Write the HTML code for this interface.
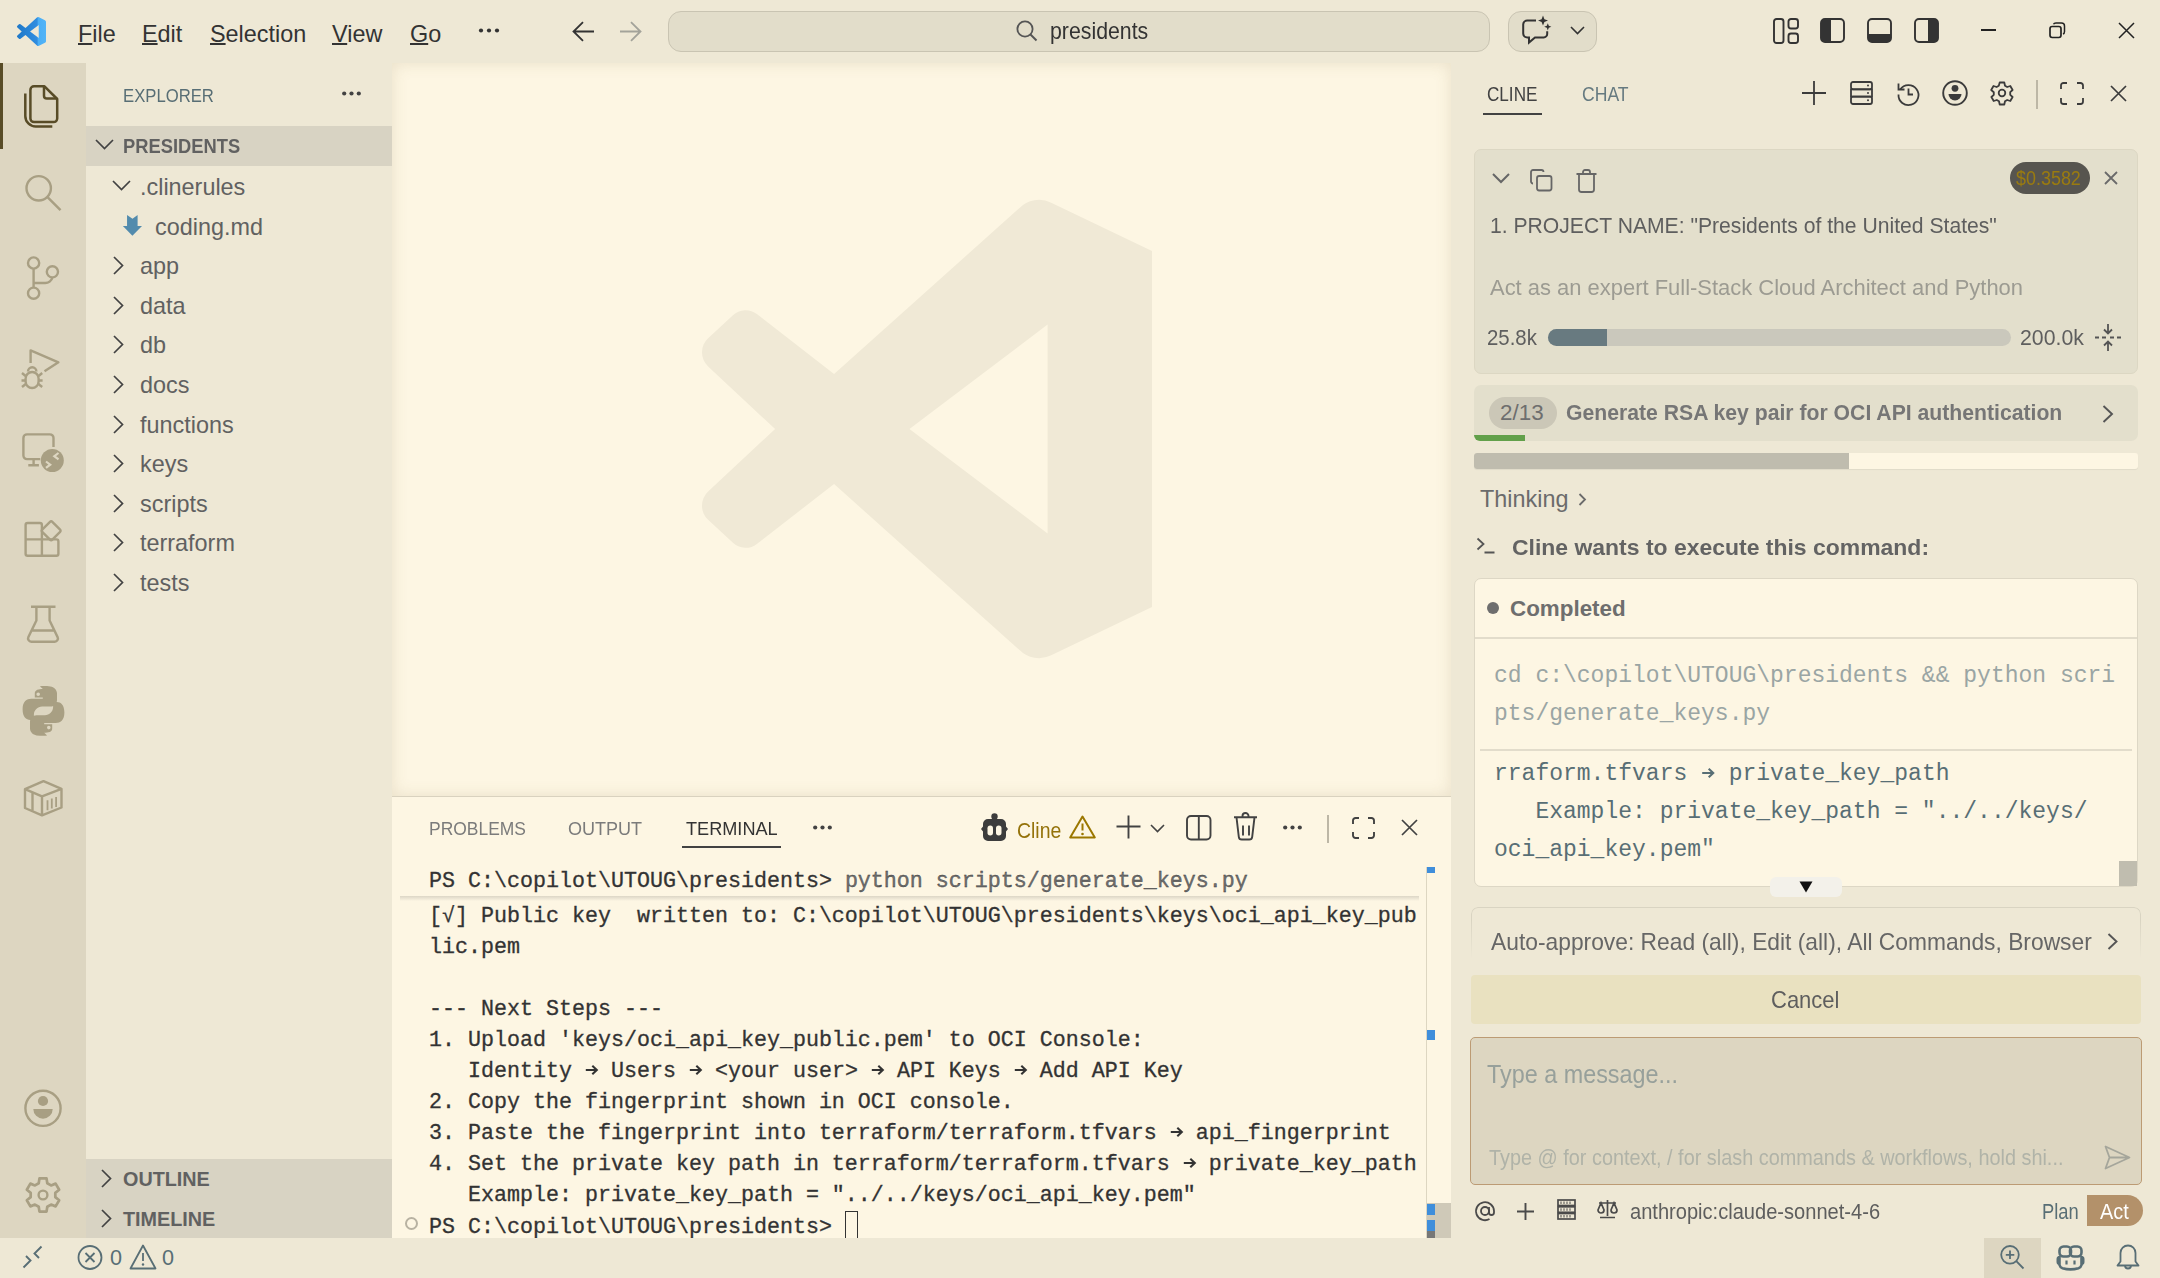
<!DOCTYPE html>
<html><head><meta charset="utf-8">
<style>
*{box-sizing:border-box;margin:0;padding:0}
html,body{width:2160px;height:1278px;overflow:hidden;background:#EEE8D5;font-family:"Liberation Sans",sans-serif;color:#616161}
.a{position:absolute}
svg{position:absolute;overflow:visible}
svg.arr{position:static;display:inline-block;vertical-align:2px}
.mono{font-family:"Liberation Mono",monospace}
#title{left:0;top:0;width:2160px;height:63px;background:#EEE8D5}
#act{left:0;top:63px;width:86px;height:1175px;background:#DDD6C1}
#side{left:86px;top:63px;width:306px;height:1175px;background:#EEE8D5}
#editor{left:392px;top:63px;width:1059px;height:733px;background:#FDF6E3}
#panel{left:392px;top:796px;width:1059px;height:442px;background:#FDF6E3;border-top:1px solid #D9D2BF}
#aux{left:1451px;top:63px;width:709px;height:1175px;background:#EEE8D5}
#status{left:0;top:1238px;width:2160px;height:40px;background:#EEE8D5}
.menu{top:19.5px;font-size:23.4px;color:#333;line-height:28px}
.menu u{text-decoration:underline;text-decoration-thickness:1.8px;text-underline-offset:0.8px}
.row{left:0;width:306px;height:40px;font-size:23.4px;line-height:40px}
.hdr{left:0;width:306px;height:40px;background:#D8D3C3;font-weight:700;font-size:19.8px;line-height:40px;color:#616161}
.term{font-family:"Liberation Mono",monospace;font-size:21.67px;color:#333;-webkit-text-stroke:0.3px #333;white-space:pre;line-height:31px}
</style></head><body>
<div id="title" class="a">
<svg style="left:17px;top:17px" width="29" height="29" viewBox="0 0 100 100"><defs><linearGradient id="lg" x1="0" y1="0" x2="1" y2="0"><stop offset="0" stop-color="#1F78C8"/><stop offset="0.7" stop-color="#2F8DE0"/><stop offset="0.72" stop-color="#4AAEF5"/><stop offset="1" stop-color="#52B4F7"/></linearGradient></defs><path fill="url(#lg)" d="M96.46 10.8L75.86.87a6.23 6.23 0 0 0-7.1 1.2L29.35 38.04 12.19 25.01a4.16 4.16 0 0 0-5.32.24L1.36 30.26a4.16 4.16 0 0 0 0 6.16L16.25 50 1.36 63.58a4.16 4.16 0 0 0 0 6.16l5.51 5.01a4.16 4.16 0 0 0 5.32.24l17.16-13.03 39.41 35.97a6.23 6.23 0 0 0 7.1 1.2l20.6-9.92a6.24 6.24 0 0 0 3.54-5.630V16.43a6.24 6.24 0 0 0-3.54-5.63zM75.01 72.7L45.1 50l29.91-22.7z"/></svg>
<div class="a menu" style="left:78px"><u>F</u>ile</div>
<div class="a menu" style="left:142px"><u>E</u>dit</div>
<div class="a menu" style="left:210px"><u>S</u>election</div>
<div class="a menu" style="left:332px"><u>V</u>iew</div>
<div class="a menu" style="left:410px"><u>G</u>o</div>
<svg style="left:479px;top:28px" width="20" height="5"><circle cx="2" cy="2.5" r="2.1" fill="#333"/><circle cx="10" cy="2.5" r="2.1" fill="#333"/><circle cx="18" cy="2.5" r="2.1" fill="#333"/></svg>
<svg style="left:572px;top:21px" width="23" height="21" viewBox="0 0 23 21"><path d="M22 10.5H2M11 1.2L1.5 10.5L11 19.8" fill="none" stroke="#333" stroke-width="1.8"/></svg>
<svg style="left:619px;top:21px" width="23" height="21" viewBox="0 0 23 21"><path d="M1 10.5H21M12 1.2L21.5 10.5L12 19.8" fill="none" stroke="#A3A39A" stroke-width="1.8"/></svg>
<div class="a" style="left:668px;top:11px;width:822px;height:41px;border-radius:13px;background:#E2DDCA;border:1.5px solid #C9C4B2"></div>
<svg style="left:1016px;top:20px" width="22" height="22" viewBox="0 0 22 22"><circle cx="9" cy="9" r="7.6" fill="none" stroke="#555" stroke-width="1.8"/><path d="M14.5 14.5L20.5 20.5" stroke="#555" stroke-width="2"/></svg>
<div class="a" style="left:1050px;top:17px;font-size:23.4px;line-height:28px;color:#333;transform:scaleX(0.91);transform-origin:0 0">presidents</div>
<div class="a" style="left:1508px;top:11px;width:89px;height:41px;border-radius:13px;background:#E2DDCA;border:1.5px solid #C9C4B2"></div>
<svg style="left:1522px;top:16px" width="30" height="28" viewBox="0 0 30 28"><path d="M14 4.6H5.2a4 4 0 0 0-4 4V17.4a4 4 0 0 0 4 4h1.8v5.2L13 21.4h8.7a3.5 3.5 0 0 0 3.5-3.5v-2.6" fill="none" stroke="#333" stroke-width="2"/><path d="M21 -0.4l1.4 3.6 3.6 1.4-3.6 1.4-1.4 3.6-1.4-3.6-3.6-1.4 3.6-1.4z" fill="#333"/><path d="M25.8 7.2l1 2.6 2.6 1-2.6 1-1 2.6-1-2.6-2.6-1 2.6-1z" fill="#333"/></svg>
<svg style="left:1570px;top:26px" width="15" height="9" viewBox="0 0 15 9"><path d="M1 1l6.5 6.5L14 1" fill="none" stroke="#333" stroke-width="1.6"/></svg>
<svg style="left:1773px;top:18px" width="26" height="26" viewBox="0 0 26 26"><rect x="1" y="1" width="9.5" height="24" rx="2.5" fill="none" stroke="#333" stroke-width="1.9"/><rect x="15.5" y="1" width="9.5" height="9.5" rx="2.5" fill="none" stroke="#333" stroke-width="1.9"/><rect x="15.5" y="15.5" width="9.5" height="9.5" rx="2.5" fill="none" stroke="#333" stroke-width="1.9"/></svg>
<svg style="left:1820px;top:18px" width="25" height="25" viewBox="0 0 25 25"><rect x="1" y="1" width="23" height="23" rx="4" fill="none" stroke="#333" stroke-width="1.9"/><path d="M5 1h6v23H5a4 4 0 0 1-4-4V5a4 4 0 0 1 4-4z" fill="#333"/></svg>
<svg style="left:1867px;top:18px" width="25" height="25" viewBox="0 0 25 25"><rect x="1" y="1" width="23" height="23" rx="4" fill="none" stroke="#333" stroke-width="1.9"/><path d="M1 16h23v4a4 4 0 0 1-4 4H5a4 4 0 0 1-4-4z" fill="#333"/></svg>
<svg style="left:1914px;top:18px" width="25" height="25" viewBox="0 0 25 25"><rect x="1" y="1" width="23" height="23" rx="4" fill="none" stroke="#333" stroke-width="1.9"/><path d="M14 1h6a4 4 0 0 1 4 4v15a4 4 0 0 1-4 4h-6z" fill="#333"/></svg>
<div class="a" style="left:1981px;top:29px;width:15px;height:2px;background:#222"></div>
<svg style="left:2049px;top:22px" width="17" height="17" viewBox="0 0 17 17"><rect x="1" y="4.5" width="11" height="11" rx="2.2" fill="none" stroke="#222" stroke-width="1.7"/><path d="M4.5 2.2Q5 1 7 1h5.5Q15.5 1 15.5 4v5.5Q15.5 11.5 14 12" fill="none" stroke="#222" stroke-width="1.5"/></svg>
<svg style="left:2118px;top:22px" width="17" height="17" viewBox="0 0 17 17"><path d="M1 1L16 16M16 1L1 16" stroke="#222" stroke-width="1.5"/></svg>
</div>
<div id="act" class="a"></div>
<svg style="left:0;top:0" width="86" height="1278" viewBox="0 0 86 1278">
<rect x="0" y="63" width="3" height="86" fill="#584C27"/>
<g fill="none" stroke="#584C27" stroke-width="2.5" stroke-linejoin="round">
<path d="M34 86.3h10.5l12.7 12.7v19.5a3.6 3.6 0 0 1-3.6 3.6H34a3.6 3.6 0 0 1-3.6-3.6V89.9a3.6 3.6 0 0 1 3.6-3.6z"/>
<path d="M44 86.3v9.5a2.8 2.8 0 0 0 2.8 2.8h10.4"/>
<path d="M25.3 93.5v22.5a10.5 10.5 0 0 0 10.5 10.5h16.5"/>
</g>
<g fill="none" stroke="#A89F83" stroke-width="2.4">
<circle cx="38.7" cy="188.3" r="12.2"/><path d="M47.5 197.2L60.5 210.2"/>
<circle cx="33.6" cy="263" r="5.6"/><circle cx="33.6" cy="293.2" r="5.6"/><circle cx="52.4" cy="271.8" r="5.6"/>
<path d="M33.6 268.6V287.6M33.6 283H45a7.4 7.4 0 0 0 7.4-5.6"/>
<path d="M30.6 363V350.4L58.4 362.3L44.5 371.2" stroke-linejoin="round"/>
<path d="M25.6 378.5a6.5 6.5 0 0 1 13 0v3a6.5 6.5 0 0 1-13 0z"/><path d="M28 371.5a4.2 4.2 0 0 1 8.4 0"/><path d="M22 373l3.6 3M42.2 373l-3.6 3M21.5 380.5h4M38.6 380.5h4M22 387l3.8-3M42.2 387l-3.8-3"/>
<path d="M53.5 447V438a3.6 3.6 0 0 0-3.6-3.6H27a3.6 3.6 0 0 0-3.6 3.6v17.5a3.6 3.6 0 0 0 3.6 3.6h13.3"/><path d="M33.6 459.5v5.6M28.3 465.3h10.6"/>
<path d="M25.6 539.4h16.3v16.3H27.6a2 2 0 0 1-2-2zM25.6 539.4V525a2 2 0 0 1 2-2h12.3a2 2 0 0 1 2 2v14.4M41.9 539.4h14.5a2 2 0 0 1 2 2v12.3a2 2 0 0 1-2 2H41.9"/>
<path d="M52.3 521.8l7.8 7.8a1.6 1.6 0 0 1 0 2.3l-7.8 7.8a1.6 1.6 0 0 1-2.3 0l-7.8-7.8a1.6 1.6 0 0 1 0-2.3l7.8-7.8a1.6 1.6 0 0 1 2.3 0z" stroke-linejoin="round"/>
<path d="M31 606.8h24.5M36.4 606.8v13.8l-8 16.5a3.2 3.2 0 0 0 2.9 4.6h23.4a3.2 3.2 0 0 0 2.9-4.6l-8-16.5V606.8M31.8 630.5h22.5" stroke-linejoin="round"/>
<path d="M43.5 781.2L61.5 788.8V807.5L42 815.3L25 808V789.2z M25 789.2L42 796.3L61.5 788.8 M42 796.3V815.3 M32.5 792.5V811.2" stroke-linejoin="round"/>
<path d="M47.5 800.2v10M51.8 798.6v10M56.1 797v10" stroke-width="1.8"/>
<circle cx="43" cy="1108.3" r="17.6"/>
<path d="M38.72 1183.25 L39.47 1178.37 L46.53 1178.37 L47.28 1183.25 L51.03 1185.42 L55.63 1183.62 L59.17 1189.75 L55.31 1192.83 L55.31 1197.17 L59.17 1200.25 L55.63 1206.38 L51.03 1204.58 L47.28 1206.75 L46.53 1211.63 L39.47 1211.63 L38.72 1206.75 L34.97 1204.58 L30.37 1206.38 L26.83 1200.25 L30.69 1197.17 L30.69 1192.83 L26.83 1189.75 L30.37 1183.62 L34.97 1185.42Z" stroke-linejoin="round" stroke-width="2.7"/>
<circle cx="43" cy="1195" r="4.4"/>
</g>
<circle cx="52.3" cy="460.5" r="11.5" fill="#A89F83"/>
<path d="M46 461.5l4.2 3.2-4.2 3.2M58.5 453l-4.2 3.2 4.2 3.2" fill="none" stroke="#DDD6C1" stroke-width="2.2"/>
<g fill="#A89F83">
<circle cx="43" cy="1101" r="5.1"/>
<path d="M33.3 1109h19.4a9.7 9.7 0 0 1-19.4 0z"/>
<path d="M42.8 689c-4 0-8 .8-8 4.3v4.2h8v1.3H31.2c-4.4 0-8.6 2.7-8.6 10.5s3.6 10.6 7.6 10.6h3.7v-5.2c0-4.4 3.7-8.2 8.2-8.2h8.5c3.6 0 6.4-3 6.4-6.6v-6.6c0-3.6-3-6.3-6.6-6.9-2.2-.3-4.6-.4-6.6-.4-1.4 0-2.6.1-3.9.3zm-4.6 3.4a1.8 1.8 0 1 1 0 3.6 1.8 1.8 0 0 1 0-3.6z"/>
<path d="M44.2 732.8c4 0 8-.8 8-4.3v-4.2h-8v-1.3h11.6c4.4 0 8.6-2.7 8.6-10.5s-3.6-10.6-7.6-10.6h-3.7v5.2c0 4.4-3.7 8.2-8.2 8.2h-8.5c-3.6 0-6.4 3-6.4 6.6v6.6c0 3.6 3 6.3 6.6 6.9 2.2.3 4.6.4 6.6.4 1.4 0 2.6-.1 3.9-.3zm4.6-3.4a1.8 1.8 0 1 1 0-3.6 1.8 1.8 0 0 1 0 3.6z"/>
</g>
</svg>
<div id="side" class="a">
<div class="a" style="left:37px;top:22.5px;font-size:19px;line-height:20px;color:#586E75;transform:scaleX(0.878);transform-origin:0 0">EXPLORER</div>
<svg style="left:256px;top:28px" width="20" height="5"><circle cx="2.2" cy="2.5" r="2.1" fill="#424242"/><circle cx="9.5" cy="2.5" r="2.1" fill="#424242"/><circle cx="16.8" cy="2.5" r="2.1" fill="#424242"/></svg>
<div class="a hdr" style="top:63px"><svg style="left:9px;top:13px" width="19" height="11" viewBox="0 0 19 11"><path d="M1 1l8.5 8.5L18 1" fill="none" stroke="#424242" stroke-width="1.7"/></svg><span class="a" style="left:37px;top:0;transform:scaleX(0.927);transform-origin:0 0">PRESIDENTS</span></div>
<div class="a row" style="top:104px"><svg style="left:26px;top:13px" width="19" height="11" viewBox="0 0 19 11"><path d="M1 1l8.5 8.5L18 1" fill="none" stroke="#424242" stroke-width="1.7"/></svg><span class="a" style="left:54px;top:0">.clinerules</span></div>
<div class="a row" style="top:144px"><svg style="left:36px;top:7px" width="21" height="23" viewBox="0 0 21 23"><path d="M5.05 1.1L10.5 4.8L15.6 1.1V12.1H20L10.4 21.7L0.9 12.1H5.05Z" fill="#528BAD"/></svg><span class="a" style="left:69px;top:0">coding.md</span></div>
<div class="a row" style="top:183px"><svg style="left:27px;top:10px" width="11" height="19" viewBox="0 0 11 19"><path d="M1 1l8.5 8.5L1 18" fill="none" stroke="#424242" stroke-width="1.7"/></svg><span class="a" style="left:54px;top:0">app</span></div>
<div class="a row" style="top:223px"><svg style="left:27px;top:10px" width="11" height="19" viewBox="0 0 11 19"><path d="M1 1l8.5 8.5L1 18" fill="none" stroke="#424242" stroke-width="1.7"/></svg><span class="a" style="left:54px;top:0">data</span></div>
<div class="a row" style="top:262px"><svg style="left:27px;top:10px" width="11" height="19" viewBox="0 0 11 19"><path d="M1 1l8.5 8.5L1 18" fill="none" stroke="#424242" stroke-width="1.7"/></svg><span class="a" style="left:54px;top:0">db</span></div>
<div class="a row" style="top:302px"><svg style="left:27px;top:10px" width="11" height="19" viewBox="0 0 11 19"><path d="M1 1l8.5 8.5L1 18" fill="none" stroke="#424242" stroke-width="1.7"/></svg><span class="a" style="left:54px;top:0">docs</span></div>
<div class="a row" style="top:342px"><svg style="left:27px;top:10px" width="11" height="19" viewBox="0 0 11 19"><path d="M1 1l8.5 8.5L1 18" fill="none" stroke="#424242" stroke-width="1.7"/></svg><span class="a" style="left:54px;top:0">functions</span></div>
<div class="a row" style="top:381px"><svg style="left:27px;top:10px" width="11" height="19" viewBox="0 0 11 19"><path d="M1 1l8.5 8.5L1 18" fill="none" stroke="#424242" stroke-width="1.7"/></svg><span class="a" style="left:54px;top:0">keys</span></div>
<div class="a row" style="top:421px"><svg style="left:27px;top:10px" width="11" height="19" viewBox="0 0 11 19"><path d="M1 1l8.5 8.5L1 18" fill="none" stroke="#424242" stroke-width="1.7"/></svg><span class="a" style="left:54px;top:0">scripts</span></div>
<div class="a row" style="top:460px"><svg style="left:27px;top:10px" width="11" height="19" viewBox="0 0 11 19"><path d="M1 1l8.5 8.5L1 18" fill="none" stroke="#424242" stroke-width="1.7"/></svg><span class="a" style="left:54px;top:0">terraform</span></div>
<div class="a row" style="top:500px"><svg style="left:27px;top:10px" width="11" height="19" viewBox="0 0 11 19"><path d="M1 1l8.5 8.5L1 18" fill="none" stroke="#424242" stroke-width="1.7"/></svg><span class="a" style="left:54px;top:0">tests</span></div>
<div class="a hdr" style="top:1096px"><svg style="left:15px;top:10px" width="11" height="19" viewBox="0 0 11 19"><path d="M1 1l8.5 8.5L1 18" fill="none" stroke="#424242" stroke-width="1.7"/></svg><span class="a" style="left:37px;top:0">OUTLINE</span></div>
<div class="a hdr" style="top:1136px;height:39px"><svg style="left:15px;top:10px" width="11" height="19" viewBox="0 0 11 19"><path d="M1 1l8.5 8.5L1 18" fill="none" stroke="#424242" stroke-width="1.7"/></svg><span class="a" style="left:37px;top:0">TIMELINE</span></div>
</div>
<div id="editor" class="a">
<svg style="left:310px;top:136px" width="450" height="460" viewBox="0 0 100 100" preserveAspectRatio="none"><path fill="#F0E9D6" fill-rule="evenodd" d="M100 11.3V88.7L77.6 99.2a6.23 6.23 0 0 1-7.1-1.2L29.35 61.96 12.19 74.99a4.16 4.16 0 0 1-5.32-.24L1.36 69.74a4.16 4.16 0 0 1 0-6.16L16.25 50 1.36 36.42a4.16 4.16 0 0 1 0-6.16l5.51-5.01a4.16 4.16 0 0 1 5.32-.24L29.35 38.04 70.5 2a6.23 6.23 0 0 1 7.1-1.2zM76.8 27.3L46.1 50 76.8 72.7z"/></svg>
<div class="a" style="left:0;top:0;width:1059px;height:733px;box-shadow:inset 0 0 16px rgba(130,110,60,0.16)"></div>
</div>
<div id="panel" class="a">
<div class="a" style="left:37px;top:21.5px;font-size:19px;line-height:20px;color:#7B7B7B;transform:scaleX(0.918);transform-origin:0 0;white-space:nowrap">PROBLEMS</div>
<div class="a" style="left:176px;top:21.5px;font-size:19px;line-height:20px;color:#7B7B7B;transform:scaleX(0.949);transform-origin:0 0;white-space:nowrap">OUTPUT</div>
<div class="a" style="left:294px;top:21.5px;font-size:19px;line-height:20px;color:#333;transform:scaleX(0.954);transform-origin:0 0;white-space:nowrap">TERMINAL</div>
<div class="a" style="left:290px;top:49px;width:99px;height:2px;background:#424242"></div>
<svg style="left:421px;top:28px" width="20" height="5"><circle cx="2.2" cy="2.5" r="2.1" fill="#424242"/><circle cx="9.5" cy="2.5" r="2.1" fill="#424242"/><circle cx="16.8" cy="2.5" r="2.1" fill="#424242"/></svg>
<svg style="left:589px;top:16px" width="28" height="30" viewBox="0 0 28 30"><circle cx="13.5" cy="3.5" r="3.2" fill="#3C3C3C"/><path d="M7 6h13a5 5 0 0 1 5 5v2.5l2 2.5-2 2.5V23a5 5 0 0 1-5 5H7a5 5 0 0 1-5-5v-4.5L0 16l2-2.5V11a5 5 0 0 1 5-5z" fill="#3C3C3C"/><rect x="6.5" y="12.5" width="5.5" height="10" rx="2.7" fill="#FDF6E3"/><rect x="15" y="12.5" width="5.5" height="10" rx="2.7" fill="#FDF6E3"/></svg>
<div class="a" style="left:625px;top:22px;font-size:21.6px;line-height:24px;color:#94720A;transform:scaleX(0.9);transform-origin:0 0">Cline</div>
<svg style="left:677px;top:18px" width="27" height="24" viewBox="0 0 27 24"><path d="M13.5 1.5L25.8 22.5H1.2z" fill="none" stroke="#9B7700" stroke-width="2" stroke-linejoin="round"/><path d="M13.5 8.5v7" stroke="#9B7700" stroke-width="2"/><circle cx="13.5" cy="19" r="1.3" fill="#9B7700"/></svg>
<svg style="left:724px;top:18px" width="25" height="24" viewBox="0 0 25 24"><path d="M12.5 0.5v23M0.5 11.5h24" stroke="#424242" stroke-width="1.9"/></svg>
<svg style="left:758px;top:27px" width="15" height="9" viewBox="0 0 15 9"><path d="M1 1l6.5 6.5L14 1" fill="none" stroke="#424242" stroke-width="1.6"/></svg>
<svg style="left:794px;top:18px" width="26" height="26" viewBox="0 0 26 26"><rect x="1" y="1" width="23.5" height="23.5" rx="4" fill="none" stroke="#424242" stroke-width="1.9"/><path d="M12.8 1v23.5" stroke="#424242" stroke-width="1.9"/></svg>
<svg style="left:841px;top:16px" width="25" height="28" viewBox="0 0 25 28"><path d="M1 4.3h23M9.5 4.3V3a3 3 0 0 1 6 0v1.3M3.5 4.3l2.3 19.5a3 3 0 0 0 3 2.7h7.4a3 3 0 0 0 3-2.7l2.3-19.5M10 12.5v10M16 12.5v10" fill="none" stroke="#424242" stroke-width="1.9"/></svg>
<svg style="left:891px;top:28px" width="20" height="5"><circle cx="2.2" cy="2.5" r="2.1" fill="#424242"/><circle cx="9.5" cy="2.5" r="2.1" fill="#424242"/><circle cx="16.8" cy="2.5" r="2.1" fill="#424242"/></svg>
<div class="a" style="left:935px;top:18px;width:1.5px;height:28px;background:#BDB7A6"></div>
<svg style="left:960px;top:20px" width="23" height="22" viewBox="0 0 23 22"><path d="M1 7V3.5A2.5 2.5 0 0 1 3.5 1H7M16 1h3.5A2.5 2.5 0 0 1 22 3.5V7M22 15v3.5a2.5 2.5 0 0 1-2.5 2.5H16M7 21H3.5A2.5 2.5 0 0 1 1 18.5V15" fill="none" stroke="#424242" stroke-width="1.9"/></svg>
<svg style="left:1009px;top:22px" width="17" height="17" viewBox="0 0 17 17"><path d="M1 1L16 16M16 1L1 16" stroke="#424242" stroke-width="1.7"/></svg>
<div class="a term" style="left:37px;top:69px;width:992px;height:34px;line-height:31px;color:#333">PS C:\copilot\UTOUG\presidents&gt; <span style="color:#6F6F6F">python scripts/generate_keys.py</span></div>
<div class="a" style="left:8px;top:99px;width:1019px;height:5px;background:linear-gradient(#DCD6C6,rgba(253,246,227,0))"></div>
<div class="a term" style="left:37px;top:104px;width:992px;height:340px;line-height:31px;overflow:hidden">[√] Public key  written to: C:\copilot\UTOUG\presidents\keys\oci_api_key_pub
lic.pem

--- Next Steps ---
1. Upload 'keys/oci_api_key_public.pem' to OCI Console:
   Identity <svg class="arr" width="13" height="10" viewBox="0 0 13 10"><path d="M0.8 5H11.8M7.3 0.8L11.8 5L7.3 9.2" fill="none" stroke="#333" stroke-width="2.1"/></svg> Users <svg class="arr" width="13" height="10" viewBox="0 0 13 10"><path d="M0.8 5H11.8M7.3 0.8L11.8 5L7.3 9.2" fill="none" stroke="#333" stroke-width="2.1"/></svg> &lt;your user&gt; <svg class="arr" width="13" height="10" viewBox="0 0 13 10"><path d="M0.8 5H11.8M7.3 0.8L11.8 5L7.3 9.2" fill="none" stroke="#333" stroke-width="2.1"/></svg> API Keys <svg class="arr" width="13" height="10" viewBox="0 0 13 10"><path d="M0.8 5H11.8M7.3 0.8L11.8 5L7.3 9.2" fill="none" stroke="#333" stroke-width="2.1"/></svg> Add API Key
2. Copy the fingerprint shown in OCI console.
3. Paste the fingerprint into terraform/terraform.tfvars <svg class="arr" width="13" height="10" viewBox="0 0 13 10"><path d="M0.8 5H11.8M7.3 0.8L11.8 5L7.3 9.2" fill="none" stroke="#333" stroke-width="2.1"/></svg> api_fingerprint
4. Set the private key path in terraform/terraform.tfvars <svg class="arr" width="13" height="10" viewBox="0 0 13 10"><path d="M0.8 5H11.8M7.3 0.8L11.8 5L7.3 9.2" fill="none" stroke="#333" stroke-width="2.1"/></svg> private_key_path
   Example: private_key_path = "../../keys/oci_api_key.pem"
PS C:\copilot\UTOUG\presidents&gt; <span style="display:inline-block;width:13px;height:28px;border:1.7px solid #333;vertical-align:-6px"></span></div>
<div class="a" style="left:13px;top:420px;width:13px;height:13px;border-radius:50%;border:2px solid #B8B2A2"></div>
<div class="a" style="left:1034px;top:70px;width:1px;height:372px;background:#DDD6C1"></div>
<div class="a" style="left:1035px;top:406px;width:24px;height:36px;background:#CFC9B8"></div>
<div class="a" style="left:1035px;top:70px;width:8px;height:6px;background:#3F8EDB"></div>
<div class="a" style="left:1035px;top:233px;width:8px;height:10px;background:#3F8EDB"></div>
<div class="a" style="left:1035px;top:407px;width:8px;height:11px;background:#3F8EDB"></div>
<div class="a" style="left:1035px;top:423px;width:8px;height:11px;background:#3F8EDB"></div>
<div class="a" style="left:1035px;top:434px;width:8px;height:8px;background:#777"></div>
</div>
<div id="aux" class="a"></div>
<div class="a" style="left:1487px;top:85.24px;font-family:'Liberation Sans';font-size:19.8px;line-height:19.8px;color:#424242;font-weight:400;white-space:pre;transform:scaleX(0.865);transform-origin:0 0;">CLINE</div>
<div class="a" style="left:1582px;top:85.24px;font-family:'Liberation Sans';font-size:19.8px;line-height:19.8px;color:#667A80;font-weight:400;white-space:pre;transform:scaleX(0.89);transform-origin:0 0;">CHAT</div>
<div class="a" style="left:1483px;top:113px;width:59px;height:2px;background:#424242"></div>
<svg style="left:1802px;top:81px" width="24" height="24" viewBox="0 0 24 24"><path d="M12 0v24M0 12h24" stroke="#3B3B3B" stroke-width="1.8"/></svg>
<svg style="left:1850px;top:81px" width="23" height="24" viewBox="0 0 23 24"><g fill="none" stroke="#3B3B3B" stroke-width="1.8"><rect x="1" y="1" width="21" height="7.3" rx="2"/><rect x="1" y="8.3" width="21" height="7.3" rx="0"/><rect x="1" y="15.6" width="21" height="7.4" rx="2"/></g><g fill="#3B3B3B"><circle cx="18" cy="4.6" r="1"/><circle cx="18" cy="12" r="1"/><circle cx="18" cy="19.3" r="1"/></g></svg>
<svg style="left:1897px;top:82px" width="23" height="23" viewBox="0 0 23 23"><g fill="none" stroke="#3B3B3B" stroke-width="1.8"><path d="M3.2 7.5A10 10 0 1 1 1.5 12.5"/><path d="M1.5 1.5v6h6"/><path d="M11.5 6.5v6h4.5"/></g></svg>
<svg style="left:1942px;top:80px" width="26" height="26" viewBox="0 0 26 26"><circle cx="13" cy="13" r="11.8" fill="none" stroke="#3B3B3B" stroke-width="1.9"/><circle cx="13" cy="8.3" r="3.4" fill="#3B3B3B"/><path d="M6.5 14h13a6.5 6.5 0 0 1-13 0z" fill="#3B3B3B"/></svg>
<svg style="left:1989px;top:80px" width="26" height="26" viewBox="0 0 26 26"><path d="M10.7 2.5h4.6l.7 3.2 2.2 1.3 3.1-1 2.3 4-2.4 2.2v2.6l2.4 2.2-2.3 4-3.1-1-2.2 1.3-.7 3.2h-4.6l-.7-3.2-2.2-1.3-3.1 1-2.3-4 2.4-2.2v-2.6L2.2 10l2.3-4 3.1 1 2.2-1.3z" fill="none" stroke="#3B3B3B" stroke-width="1.8" stroke-linejoin="round"/><circle cx="13" cy="13" r="3.3" fill="none" stroke="#3B3B3B" stroke-width="1.8"/></svg>
<div class="a" style="left:2036px;top:80px;width:2px;height:29px;background:#BDB7A6"></div>
<svg style="left:2060px;top:82px" width="24" height="23" viewBox="0 0 24 23"><path d="M1 7V3.5A2.5 2.5 0 0 1 3.5 1H7M17 1h3.5A2.5 2.5 0 0 1 23 3.5V7M23 16v3.5a2.5 2.5 0 0 1-2.5 2.5H17M7 22H3.5A2.5 2.5 0 0 1 1 19.5V16" fill="none" stroke="#3B3B3B" stroke-width="1.8"/></svg>
<svg style="left:2110px;top:85px" width="17" height="17" viewBox="0 0 17 17"><path d="M1 1L16 16M16 1L1 16" stroke="#3B3B3B" stroke-width="1.7"/></svg>
<div class="a" style="left:1474px;top:149px;width:664px;height:225px;background:#E3DFCC;border-radius:7px;border:1px solid #DCD7C3"></div>
<svg style="left:1492px;top:173px" width="18" height="11" viewBox="0 0 18 11"><path d="M1 1l8 8 8-8" fill="none" stroke="#666666" stroke-width="2"/></svg>
<svg style="left:1530px;top:169px" width="23" height="23" viewBox="0 0 23 23"><g fill="none" stroke="#666666" stroke-width="1.8"><path d="M3 14.5a2 2 0 0 1-2-2V3a2 2 0 0 1 2-2h8.5a2 2 0 0 1 2 2"/><rect x="7" y="7" width="14.5" height="14.5" rx="2.2"/></g></svg>
<svg style="left:1576px;top:169px" width="21" height="24" viewBox="0 0 21 24"><g fill="none" stroke="#666666" stroke-width="1.8"><path d="M0.5 5h20M7 5V3a2 2 0 0 1 2-2h3a2 2 0 0 1 2 2v2M3 5v15.5a2.5 2.5 0 0 0 2.5 2.5h10a2.5 2.5 0 0 0 2.5-2.5V5"/></g></svg>
<div class="a" style="left:2010px;top:162px;width:80px;height:32px;background:#57554F;border-radius:16px"></div>
<div class="a" style="left:2016px;top:169.49px;font-family:'Liberation Sans';font-size:19.5px;line-height:19.5px;color:#9A7B10;font-weight:400;white-space:pre;transform:scaleX(0.92);transform-origin:0 0;">$0.3582</div>
<svg style="left:2104px;top:171px" width="14" height="14" viewBox="0 0 14 14"><path d="M1 1L13 13M13 1L1 13" stroke="#6A6A6A" stroke-width="1.8"/></svg>
<div class="a" style="left:1490px;top:215.04px;font-family:'Liberation Sans';font-size:22.4px;line-height:22.4px;color:#5E5E5E;font-weight:400;white-space:pre;transform:scaleX(0.944);transform-origin:0 0;">1. PROJECT NAME: &quot;Presidents of the United States&quot;</div>
<div class="a" style="left:1490px;top:277.04px;font-family:'Liberation Sans';font-size:22.4px;line-height:22.4px;color:#9C9B92;font-weight:400;white-space:pre;transform:scaleX(0.98);transform-origin:0 0;">Act as an expert Full-Stack Cloud Architect and Python</div>
<div class="a" style="left:1487px;top:326.54px;font-family:'Liberation Sans';font-size:22.4px;line-height:22.4px;color:#5E5E5E;font-weight:400;white-space:pre;transform:scaleX(0.91);transform-origin:0 0;">25.8k</div>
<div class="a" style="left:1548px;top:329px;width:463px;height:17px;background:#CAC8BC;border-radius:9px;overflow:hidden"></div>
<div class="a" style="left:1548px;top:329px;width:59px;height:17px;background:#687A80;border-radius:9px 0 0 9px"></div>
<div class="a" style="left:2020px;top:326.54px;font-family:'Liberation Sans';font-size:22.4px;line-height:22.4px;color:#5E5E5E;font-weight:400;white-space:pre;transform:scaleX(0.95);transform-origin:0 0;">200.0k</div>
<svg style="left:2094px;top:323px" width="28" height="29" viewBox="0 0 28 29"><g fill="none" stroke="#555" stroke-width="1.8"><path d="M14 1v9M10 6.5l4 4 4-4M14 28v-9M10 22.5l4-4 4 4"/><path d="M1 14.5h4M8 14.5h4M16 14.5h4M23 14.5h4"/></g></svg>
<div class="a" style="left:1474px;top:385px;width:664px;height:56px;background:#E3DFCC;border-radius:7px;overflow:hidden"></div>
<div class="a" style="left:1474px;top:435px;width:51px;height:6px;background:#62A04A;border-radius:0 0 0 7px"></div>
<div class="a" style="left:1489px;top:397px;width:68px;height:32px;background:#CBC7B7;border-radius:16px"></div>
<div class="a" style="left:1500px;top:402.04px;font-family:'Liberation Sans';font-size:22.4px;line-height:22.4px;color:#6E6E6E;font-weight:400;white-space:pre;">2/13</div>
<div class="a" style="left:1566px;top:402.04px;font-family:'Liberation Sans';font-size:22.4px;line-height:22.4px;color:#767676;font-weight:700;white-space:pre;transform:scaleX(0.946);transform-origin:0 0;">Generate RSA key pair for OCI API authentication</div>
<svg style="left:2102px;top:405px" width="12" height="18" viewBox="0 0 12 18"><path d="M1.5 1l8.5 8-8.5 8" fill="none" stroke="#555" stroke-width="1.9"/></svg>
<div class="a" style="left:1474px;top:453px;width:664px;height:16px;background:#FDF6E3;border-radius:3px;overflow:hidden;box-shadow:0 1px 1px rgba(0,0,0,0.06)"></div>
<div class="a" style="left:1474px;top:453px;width:375px;height:16px;background:#BFBCAE;border-radius:3px 0 0 3px"></div>
<div class="a" style="left:1480px;top:488.19px;font-family:'Liberation Sans';font-size:23.4px;line-height:23.4px;color:#6B6B6B;font-weight:400;white-space:pre;">Thinking</div>
<svg style="left:1578px;top:493px" width="9" height="13" viewBox="0 0 9 13"><path d="M1.5 1l5.5 5.5-5.5 5.5" fill="none" stroke="#6B6B6B" stroke-width="1.8"/></svg>
<svg style="left:1476px;top:537px" width="20" height="17" viewBox="0 0 20 17"><path d="M1.5 1.5l6 5.5-6 5.5M8.5 15.5h10" fill="none" stroke="#555" stroke-width="1.8"/></svg>
<div class="a" style="left:1512px;top:537.04px;font-family:'Liberation Sans';font-size:22.4px;line-height:22.4px;color:#636363;font-weight:700;white-space:pre;transform:scaleX(1.025);transform-origin:0 0;">Cline wants to execute this command:</div>
<div class="a" style="left:1474px;top:578px;width:664px;height:309px;background:#FDF6E3;border:1.5px solid #DDD7C5;border-radius:7px;overflow:hidden"></div>
<div class="a" style="left:1475px;top:637px;width:662px;height:2px;background:#E2DCCB"></div>
<div class="a" style="left:1487px;top:602px;width:12px;height:12px;background:#6E6E6E;border-radius:50%"></div>
<div class="a" style="left:1510px;top:597.54px;font-family:'Liberation Sans';font-size:22.4px;line-height:22.4px;color:#6E6E6E;font-weight:700;white-space:pre;">Completed</div>
<div class="a" style="left:1494px;top:665.37px;font-family:'Liberation Mono';font-size:23.0px;line-height:23.0px;color:#9AA5A4;font-weight:400;white-space:pre;">cd c:\copilot\UTOUG\presidents &amp;&amp; python scri</div>
<div class="a" style="left:1494px;top:702.87px;font-family:'Liberation Mono';font-size:23.0px;line-height:23.0px;color:#9AA5A4;font-weight:400;white-space:pre;">pts/generate_keys.py</div>
<div class="a" style="left:1480px;top:749px;width:652px;height:2px;background:#E2DCCB"></div>
<div class="a" style="left:1494px;top:762.87px;font-family:'Liberation Mono';font-size:23.0px;line-height:23.0px;color:#586E75;font-weight:400;white-space:pre;">rraform.tfvars <svg class="arr" width="13.8" height="10" viewBox="0 0 13 10"><path d="M0.8 5H11.8M7.3 0.8L11.8 5L7.3 9.2" fill="none" stroke="#586E75" stroke-width="2.1"/></svg> private_key_path</div>
<div class="a" style="left:1494px;top:800.87px;font-family:'Liberation Mono';font-size:23.0px;line-height:23.0px;color:#586E75;font-weight:400;white-space:pre;">   Example: private_key_path = &quot;../../keys/</div>
<div class="a" style="left:1494px;top:838.87px;font-family:'Liberation Mono';font-size:23.0px;line-height:23.0px;color:#586E75;font-weight:400;white-space:pre;">oci_api_key.pem&quot;</div>
<div class="a" style="left:2119px;top:861px;width:18px;height:25px;background:#C0BDAF"></div>
<div class="a" style="left:1770px;top:877px;width:72px;height:20px;background:#F3F1EA;border-radius:6px"></div>
<svg style="left:1799px;top:881px" width="14" height="12" viewBox="0 0 14 12"><path d="M0.5 0.5h13L7 11.5z" fill="#111"/></svg>
<div class="a" style="left:1471px;top:907px;width:670px;height:68px;border:1.5px solid #D9D4C2;border-bottom:none;border-radius:7px 7px 0 0;-webkit-mask-image:linear-gradient(#000 20%,transparent 75%)"></div>
<div class="a" style="left:1491px;top:931.19px;font-family:'Liberation Sans';font-size:23.4px;line-height:23.4px;color:#666666;font-weight:400;white-space:pre;transform:scaleX(0.975);transform-origin:0 0;">Auto-approve: Read (all), Edit (all), All Commands, Browser</div>
<svg style="left:2107px;top:933px" width="12" height="17" viewBox="0 0 12 17"><path d="M1.5 1l8 7.5-8 7.5" fill="none" stroke="#555" stroke-width="1.9"/></svg>
<div class="a" style="left:1471px;top:975px;width:670px;height:49px;background:#E9E1C0;border-radius:4px"></div>
<div class="a" style="left:1771px;top:989.19px;font-family:'Liberation Sans';font-size:23.4px;line-height:23.4px;color:#5E5E5E;font-weight:400;white-space:pre;transform:scaleX(0.94);transform-origin:0 0;">Cancel</div>
<div class="a" style="left:1470px;top:1037px;width:672px;height:148px;background:#DDD6C1;border:1.5px solid #BC9B74;border-radius:5px"></div>
<div class="a" style="left:1487px;top:1061.84px;font-family:'Liberation Sans';font-size:25px;line-height:25px;color:#97A09B;font-weight:400;white-space:pre;transform:scaleX(0.935);transform-origin:0 0;">Type a message...</div>
<div class="a" style="left:1489px;top:1146.72px;font-family:'Liberation Sans';font-size:21.6px;line-height:21.6px;color:#B0B3A8;font-weight:400;white-space:pre;transform:scaleX(0.92);transform-origin:0 0;">Type @ for context, / for slash commands &amp; workflows, hold shi...</div>
<svg style="left:2104px;top:1145px" width="27" height="25" viewBox="0 0 27 25"><path d="M1.5 1.5L25.5 12.5L1.5 23.5L5.5 12.5z M5.5 12.5H25.5" fill="none" stroke="#A5A69B" stroke-width="1.8" stroke-linejoin="round"/></svg>
<svg style="left:1474px;top:1201px" width="22" height="20" viewBox="0 0 22 20"><g fill="none" stroke="#4A4A4A" stroke-width="1.8"><circle cx="11" cy="10" r="4"/><path d="M15 6v5.5a2.5 2.5 0 0 0 5 0V10A9 9 0 1 0 15.5 18"/></g></svg>
<svg style="left:1517px;top:1203px" width="17" height="17" viewBox="0 0 17 17"><path d="M8.5 0v17M0 8.5h17" stroke="#4A4A4A" stroke-width="1.9"/></svg>
<svg style="left:1557px;top:1199px" width="19" height="21" viewBox="0 0 19 21"><g fill="none" stroke="#4A4A4A" stroke-width="1.7"><rect x="1" y="1" width="17" height="5.5"/><rect x="1" y="7.8" width="17" height="5.5"/><rect x="1" y="14.5" width="17" height="5.5"/></g><path d="M4 2.5v2.5M7 2.5v2.5M10 2.5v2.5M13 2.5v2.5M4 9.3v2.5M7 9.3v2.5M10 9.3v2.5M13 9.3v2.5M4 16v2.5M7 16v2.5M10 16v2.5M13 16v2.5" stroke="#4A4A4A" stroke-width="1"/></svg>
<svg style="left:1597px;top:1199px" width="21" height="20" viewBox="0 0 21 20"><g fill="none" stroke="#4A4A4A" stroke-width="1.7"><path d="M10.5 1v16M3 18.5h15M2 4h17M10.5 2.5"/><path d="M1 11l3-7 3 7a3 3 0 0 1-6 0zM14 11l3-7 3 7a3 3 0 0 1-6 0z"/></g></svg>
<div class="a" style="left:1630px;top:1200.72px;font-family:'Liberation Sans';font-size:21.6px;line-height:21.6px;color:#5E5E5E;font-weight:400;white-space:pre;transform:scaleX(0.93);transform-origin:0 0;">anthropic:claude-sonnet-4-6</div>
<div class="a" style="left:2042px;top:1200.72px;font-family:'Liberation Sans';font-size:21.6px;line-height:21.6px;color:#586E75;font-weight:400;white-space:pre;transform:scaleX(0.85);transform-origin:0 0;">Plan</div>
<div class="a" style="left:2087px;top:1195px;width:56px;height:31px;background:#B3916A;border-radius:0 16px 16px 0"></div>
<div class="a" style="left:2100px;top:1200.72px;font-family:'Liberation Sans';font-size:21.6px;line-height:21.6px;color:#FFFFFF;font-weight:400;white-space:pre;transform:scaleX(0.92);transform-origin:0 0;">Act</div>
<div id="status" class="a"></div>
<svg style="left:22px;top:1245px" width="21" height="24" viewBox="0 0 21 24"><path d="M1.5 22.5L8.5 15.5L4 11M19.5 1.5L12.5 8.5L17 13" fill="none" stroke="#586E75" stroke-width="1.9"/></svg>
<svg style="left:77px;top:1245px" width="26" height="26" viewBox="0 0 26 26"><circle cx="13" cy="12.5" r="11.5" fill="none" stroke="#586E75" stroke-width="1.8"/><path d="M8.5 8l9 9M17.5 8l-9 9" stroke="#586E75" stroke-width="1.8"/></svg>
<div class="a" style="left:110px;top:1247.22px;font-family:'Liberation Sans';font-size:21.6px;line-height:21.6px;color:#586E75;font-weight:400;white-space:pre;">0</div>
<svg style="left:129px;top:1244px" width="28" height="26" viewBox="0 0 28 26"><path d="M14 1.5L26.5 24.5H1.5z" fill="none" stroke="#586E75" stroke-width="1.8" stroke-linejoin="round"/><path d="M14 9v8" stroke="#586E75" stroke-width="1.8"/><circle cx="14" cy="20.5" r="1.2" fill="#586E75"/></svg>
<div class="a" style="left:162px;top:1247.22px;font-family:'Liberation Sans';font-size:21.6px;line-height:21.6px;color:#586E75;font-weight:400;white-space:pre;">0</div>
<div class="a" style="left:1984px;top:1238px;width:57px;height:40px;background:#DDD6C1"></div>
<svg style="left:2000px;top:1245px" width="25" height="25" viewBox="0 0 25 25"><circle cx="10" cy="9.8" r="8.8" fill="none" stroke="#586E75" stroke-width="1.8"/><path d="M16.3 16.2L23.5 23.5M10 5.5v8.5M5.8 9.8h8.5" stroke="#586E75" stroke-width="1.8"/></svg>
<svg style="left:2055px;top:1244px" width="31" height="27" viewBox="0 0 31 27"><g fill="none" stroke="#586E75" stroke-width="2.6"><path d="M8.5 2.5h3.5a4 4 0 0 1 4 4v2a4 4 0 0 1-4 4H8.5a4 4 0 0 1-4-4v-2a4 4 0 0 1 4-4zM19 2.5h3.5a4 4 0 0 1 4 4v2a4 4 0 0 1-4 4H19a4 4 0 0 1-4-4v-2a4 4 0 0 1 4-4z"/><path d="M4.5 12v9a4.5 4.5 0 0 0 3 3.2Q15.5 26.5 23.5 24.2a4.5 4.5 0 0 0 3-3.2V12"/></g><path d="M1.5 15a3 3 0 0 1 3-3v9a3 3 0 0 1-3-3zM29.5 15a3 3 0 0 0-3-3v9a3 3 0 0 0 3-3z" fill="#586E75"/><path d="M11.5 16.5v4M19.5 16.5v4" stroke="#586E75" stroke-width="2.2"/></svg>
<svg style="left:2116px;top:1244px" width="24" height="27" viewBox="0 0 24 27"><path d="M12 1.5a7.5 7.5 0 0 0-7.5 7.5v8.5L1.5 21.5h21l-3-4V9A7.5 7.5 0 0 0 12 1.5zM9 21.5a3 3 0 0 0 6 0" fill="none" stroke="#586E75" stroke-width="1.8" stroke-linejoin="round"/></svg>
</body></html>
